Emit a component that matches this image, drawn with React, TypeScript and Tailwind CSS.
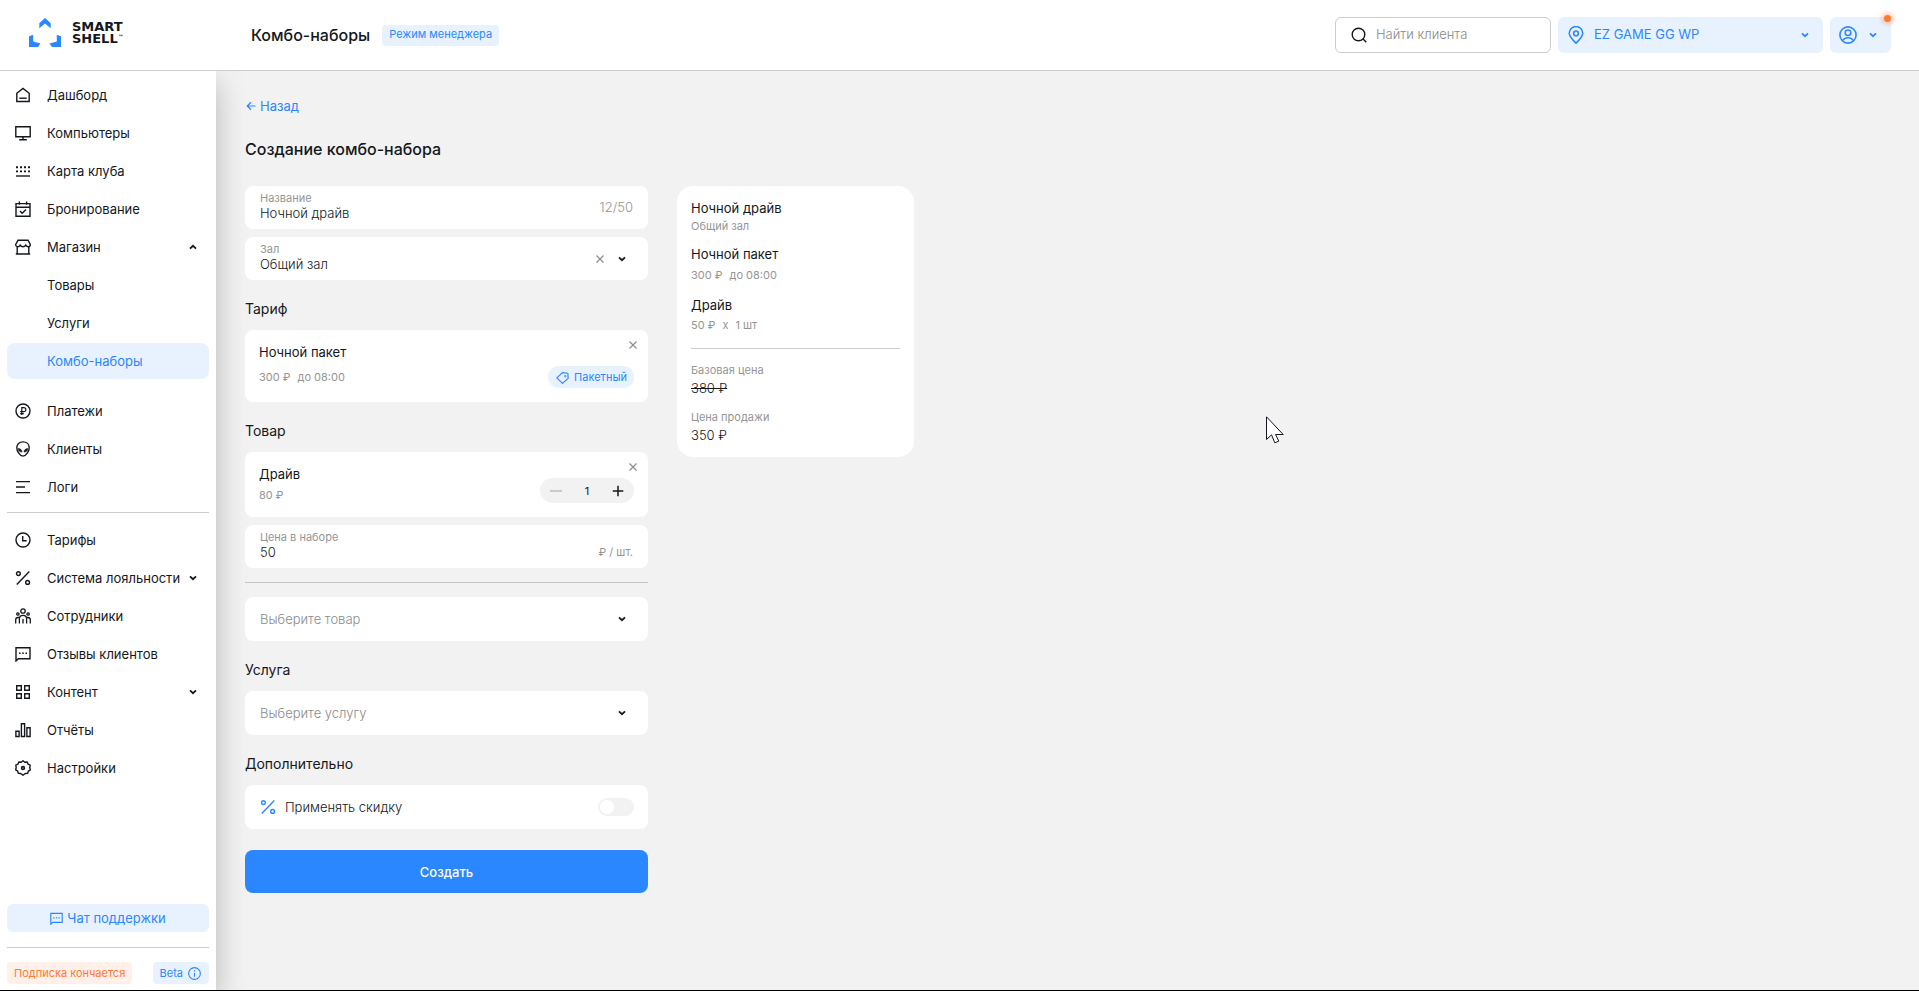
import { useState, type ReactNode } from 'react';

type NavItem = {
  label: string;
  icon?: ReactNode;
  chevron?: 'up' | 'down';
  active?: boolean;
};

function Icon({ children, className = 'w-4 h-4', stroke = 1.4 }: { children: ReactNode; className?: string; stroke?: number }) {
  return (
    <svg
      viewBox="0 0 16 16"
      fill="none"
      stroke="currentColor"
      strokeWidth={stroke}
      className={`shrink-0 ${className}`}
      aria-hidden
    >
      {children}
    </svg>
  );
}

function Chevron({ up = false, className = 'w-2 h-2' }: { up?: boolean; className?: string }) {
  return (
    <svg viewBox="0 0 8 8" fill="none" stroke="currentColor" strokeWidth={1.8} className={`shrink-0 pointer-events-none ${className}`} aria-hidden>
      <path d={up ? 'M1 5.6 4 2.8l3 2.8' : 'M1 2.4 4 5.2l3-2.8'} />
    </svg>
  );
}

function CrossIcon() {
  return (
    <svg viewBox="0 0 8 8" fill="none" stroke="currentColor" strokeWidth={1.2} className="w-2 h-2" aria-hidden>
      <path d="M.5.5l7 7M7.5.5l-7 7" />
    </svg>
  );
}

const percentPaths = (
  <>
    <circle cx="3.4" cy="3.6" r="1.9" />
    <circle cx="12.6" cy="12.4" r="1.9" />
    <path d="M14.3 1.6 1.8 14.4" />
  </>
);

const chatPaths = (
  <>
    <path d="M1 15V1.7h14v11.1H3.3L1 15Z" />
    <path d="M4 7.3h1.6M7.2 7.3h1.6M10.4 7.3H12" />
  </>
);

const mainNav: NavItem[] = [
  { label: 'Дашборд', icon: <Icon><path d="M1.8 6.3 8 1.4l6.2 4.9v8.2H1.8V6.3Z" /><path d="M4.3 11.2h7.4" /></Icon> },
  { label: 'Компьютеры', icon: <Icon><path d="M.8 1.8h14.4v10H.8zM8 12v2.6M4.2 14.7h7.6" /></Icon> },
  {
    label: 'Карта клуба',
    icon: (
      <Icon>
        <path d="M1 4.2h14M1 8.4h14" strokeWidth="1.9" strokeDasharray="2 2" />
        <path d="M1 13h14" />
      </Icon>
    ),
  },
  { label: 'Бронирование', icon: <Icon><path d="M1 2.6h14v12.6H1zM1 6.2h14M4.4.4v3.4M11.6.4v3.4M5 10l2.2 2.2L11 8.6" /></Icon> },
  {
    label: 'Магазин',
    chevron: 'up',
    icon: (
      <Icon>
        <path d="M3 1.2h10l2.3 4.3c0 1.4-.9 2.2-2.1 2.2s-1.9-.8-2.4-1.6c-.7 1-1.5 1.6-2.8 1.6s-2.1-.6-2.8-1.6c-.5.8-1.2 1.6-2.4 1.6S.7 6.9.7 5.5L3 1.2Z" />
        <path d="M2.2 7.8V15M13.8 7.8V15M.8 15h14.4" />
      </Icon>
    ),
  },
  { label: 'Товары' },
  { label: 'Услуги' },
  { label: 'Комбо-наборы', active: true },
];

const clientNav: NavItem[] = [
  { label: 'Платежи', icon: <Icon><circle cx="8" cy="8" r="7" /><path d="M6.8 12V4.6h2a2 2 0 0 1 0 4.1H5.2M5.2 10.6h3.6" strokeWidth="1.2" /></Icon> },
  {
    label: 'Клиенты',
    icon: (
      <Icon>
        <path d="M8 .9c3.7 0 6.2 2.4 6.2 5.8 0 3.5-3 8.4-6.2 8.4S1.8 10.2 1.8 6.7C1.8 3.3 4.3.9 8 .9Z" />
        <path d="M3.2 7.6c2.3 0 3.8 1.3 3.8 3.5-2.3 0-3.8-1.3-3.8-3.5ZM12.8 7.6c-2.3 0-3.8 1.3-3.8 3.5 2.3 0 3.8-1.3 3.8-3.5Z" fill="currentColor" strokeWidth=".6" />
      </Icon>
    ),
  },
  { label: 'Логи', icon: <Icon><path d="M1 2.6h14M1 8h9M1 13.6h14" /></Icon> },
];

const settingsNav: NavItem[] = [
  { label: 'Тарифы', icon: <Icon><circle cx="8" cy="8" r="7" /><path d="M7.7 4v4.7h4" /></Icon> },
  { label: 'Система лояльности', chevron: 'down', icon: <Icon>{percentPaths}</Icon> },
  {
    label: 'Сотрудники',
    icon: (
      <Icon stroke={1.3}>
        <circle cx="8" cy="3" r="2.2" />
        <circle cx="2.9" cy="6" r="1.2" />
        <circle cx="13.1" cy="6" r="1.2" />
        <path d="M4.4 15.5v-4.7C4.4 8.6 5.9 7.4 8 7.4s3.6 1.2 3.6 3.4v4.7M8 11v4.5M.7 15.5v-3.7c0-1.4.9-2.3 2.3-2.3h1.4M15.3 15.5v-3.7c0-1.4-.9-2.3-2.3-2.3h-1.4" />
      </Icon>
    ),
  },
  { label: 'Отзывы клиентов', icon: <Icon>{chatPaths}</Icon> },
  { label: 'Контент', chevron: 'down', icon: <Icon><path d="M1.7 1.7h4.6v4.6H1.7zM9.7 1.7h4.6v4.6H9.7zM1.7 9.7h4.6v4.6H1.7zM9.7 9.7h4.6v4.6H9.7z" /></Icon> },
  { label: 'Отчёты', icon: <Icon><path d="M.9 9.2h3.2v5.3H.9zM6.4 1.7h3.2v12.8H6.4zM11.9 5.7h3.2v8.8h-3.2z" /></Icon> },
  {
    label: 'Настройки',
    icon: (
      <Icon>
        <path d="M8 .8l1.8 1.5 2.4-.3.9 2.2 2.100 1-.4 2.300.5 2.300-2 1.300-.6 2.300-2.400.1L8 15.200l-2.300-1.700-2.400-.1-.6-2.300-2-1.300.5-2.300-.4-2.300 2.100-1L3.800 2l2.400.3L8 .8Z" strokeLinejoin="round" />
        <circle cx="8" cy="8" r="1.400" strokeWidth="1.600" />
      </Icon>
    ),
  },
];

function NavList({ items }: { items: NavItem[] }) {
  return (
    <ul className="flex flex-col gap-0.5">
      {items.map((item) => (
        <li key={item.label}>
          <a
            href="#"
            className={`h-9 pl-2 pr-3 flex items-center gap-4 rounded-lg text-[13px] leading-5 whitespace-nowrap ${
              item.active ? 'bg-[#e8f2ff] text-[#2b87ff]' : 'text-[#14171c]'
            }`}
          >
            {item.icon ?? <span className="w-4 shrink-0" />}
            <span className="flex-1 min-w-0">{item.label}</span>
            {item.chevron && <Chevron up={item.chevron === 'up'} className="w-2 h-2" />}
          </a>
        </li>
      ))}
    </ul>
  );
}

function Logo() {
  return (
    <a href="#" aria-label="Smart Shell" className="flex items-center gap-[11px] text-[#14171c]">
      <svg viewBox="0 0 32 30" fill="#2b87ff" className="w-8 h-[30px]" aria-hidden>
        <path d="M16 0l5.700 5.200v5L16 5.600l-5.700 4.600v-5L16 0Z" />
        <path d="M0 18.300 4.200 16.700v6.800l7.300 1.900L9 29H0V18.300Z" />
        <path d="M32 18.300 27.800 16.700v6.800l-7.300 1.900L23 29h9V18.300Z" />
      </svg>
      <span className="flex flex-col font-['DejaVu_Sans'] text-[13px] leading-3 font-bold">
        <span>SMART</span>
        <span className="flex">
          SHELL<span className="text-[6px] leading-2">™</span>
        </span>
      </span>
    </a>
  );
}

function Header() {
  return (
    <header className="relative z-10 h-[71px] shrink-0 border-b border-[#cccccc] bg-white flex items-center pl-[29px] pr-7">
      <div className="w-[222px] shrink-0 -mt-1">
        <Logo />
      </div>
      <h1 className="text-base leading-6 font-medium text-[#14171c]">Комбо-наборы</h1>
      <span className="ml-3 h-[21px] px-[7px] pb-0.5 flex items-center rounded bg-[#e8f2ff] text-[#2b87ff] text-[11px] leading-4">
        Режим менеджера
      </span>

      <div className="ml-auto flex items-center gap-[7px] text-[13px] leading-5">
        <label className="w-[216px] h-9 px-[15px] flex items-center gap-[9px] rounded-md border border-[#cccccc]">
          <Icon className="w-4 h-4 text-[#14171c]">
            <circle cx="7.5" cy="7.500" r="6.300" />
            <path d="M11.800 11.800l3.500 3.500" />
          </Icon>
          <input
            type="search"
            aria-label="Найти клиента"
            placeholder="Найти клиента"
            className="w-full min-w-0 pb-0.5 bg-transparent outline-none font-light placeholder:text-[#8a8a8a]"
          />
        </label>

        <label className="w-[265px] h-9 pl-[9px] pr-3.5 flex items-center gap-[9px] rounded-md bg-[#e8f2ff] text-[#2b87ff]">
          <Icon className="w-[18px] h-[18px]">
            <path d="M8 15.300C4.800 12 2 9.600 2 6.500a6 6 0 0 1 12 0c0 3.100-2.800 5.500-6 8.800Z" />
            <circle cx="8" cy="6.600" r="2.100" />
          </Icon>
          <select aria-label="Клуб" className="flex-1 pb-0.5 appearance-none bg-transparent outline-none">
            <option>EZ GAME GG WP</option>
          </select>
          <Chevron className="w-2 h-2" />
        </label>

        <button type="button" aria-label="Профиль" className="relative w-[61px] h-9 px-[9px] flex items-center gap-3 rounded-md bg-[#e8f2ff] text-[#2b87ff]">
          <Icon className="w-[18px] h-[18px]">
            <circle cx="8" cy="8" r="7.200" />
            <circle cx="8" cy="6" r="2.500" />
            <path d="M3.200 13.200C4 11.300 5.800 10.500 8 10.500s4 .8 4.800 2.700" />
          </Icon>
          <Chevron className="w-2 h-2" />
          <span className="absolute right-0 -top-0.5 w-[7px] h-[7px] rounded-full bg-[#ff7a33] shadow-[0_0_5px_2px_rgba(255,122,51,0.45)]" />
        </button>
      </div>
    </header>
  );
}

function Sidebar() {
  return (
    <aside className="w-[216px] shrink-0 bg-white px-[7px] pt-1.5 pb-1.5 flex flex-col shadow-[0_12px_28px_rgba(0,0,0,0.25)]">
      <nav>
        <NavList items={mainNav} />
        <div className="mt-3.5">
          <NavList items={clientNav} />
        </div>
        <hr className="mt-[7px] mb-[9px] border-[#cccccc]" />
        <NavList items={settingsNav} />
      </nav>

      <div className="mt-auto">
        <button type="button" className="w-full h-7 flex items-center justify-center gap-1 rounded-md bg-[#e8f2ff] text-[#2b87ff] text-[13px] leading-5">
          <Icon className="w-[13px] h-[13px]">{chatPaths}</Icon>
          Чат поддержки
        </button>
        <hr className="mt-[15px] mb-3.5 border-[#cccccc]" />
        <div className="flex items-center justify-between text-[11px] leading-4">
          <span className="h-[22px] px-[7px] flex items-center rounded bg-[#fff0e9] text-[#ff7a33]">Подписка кончается</span>
          <button type="button" className="h-[22px] pl-[7px] pr-2 flex items-center gap-[5px] rounded bg-[#e8f2ff] text-[#2b87ff]">
            Beta
            <Icon className="w-[13px] h-[13px]">
              <circle cx="8" cy="8" r="7.200" />
              <path d="M8 7v5M8 4v1.600" />
            </Icon>
          </button>
        </div>
      </div>
    </aside>
  );
}

function SectionTitle({ children }: { children: ReactNode }) {
  return <h3 className="mt-[19px] mb-[11px] text-sm leading-5 text-[#14171c]">{children}</h3>;
}

function EmptySelect({ placeholder }: { placeholder: string }) {
  return (
    <label className="h-11 pl-[15px] pr-[22px] flex items-center rounded-lg bg-white">
      <select aria-label={placeholder} className="flex-1 appearance-none bg-transparent outline-none font-light text-[13px] leading-5 text-[#8a8a8a]">
        <option>{placeholder}</option>
      </select>
      <Chevron />
    </label>
  );
}

function ComboForm() {
  const [name, setName] = useState('Ночной драйв');
  const [price, setPrice] = useState('50');
  const [count, setCount] = useState(1);

  return (
    <form className="w-[403px] shrink-0 text-[13px] text-[#14171c]" onSubmit={(e) => e.preventDefault()}>
      <div className="h-[43px] px-[15px] flex items-center justify-between rounded-lg bg-white">
        <div className="pb-[3px] flex flex-col">
          <label htmlFor="name" className="text-[11px] leading-[14px] text-[#959595]">Название</label>
          <input id="name" value={name} maxLength={50} onChange={(e) => setName(e.target.value)} className="h-4 leading-4 font-light outline-none" />
        </div>
        <span className="text-[#959595] font-light">{name.length}/50</span>
      </div>

      <div className="mt-2 h-[43px] pl-[15px] pr-[22px] flex items-center rounded-lg bg-white">
        <div className="flex-1 pb-[3px] flex flex-col">
          <label htmlFor="hall" className="text-[11px] leading-[14px] text-[#959595]">Зал</label>
          <select id="hall" className="h-4 leading-4 font-light appearance-none outline-none">
            <option>Общий зал</option>
          </select>
        </div>
        <button type="button" aria-label="Очистить" className="mr-3.5 text-[#8a8d91]">
          <CrossIcon />
        </button>
        <Chevron />
      </div>

      <SectionTitle>Тариф</SectionTitle>
      <div className="h-[72px] px-3.5 rounded-lg bg-white relative flex items-center justify-between">
        <div className="pb-[5px]">
          <p className="leading-5">Ночной пакет</p>
          <p className="mt-[7px] flex gap-[7px] text-[11px] leading-4 text-[#959595]">
            <span>300 ₽</span>
            <span>до 08:00</span>
          </p>
        </div>
        <span className="mt-[22px] h-[22px] pl-2 pr-[7px] flex items-center gap-[5px] rounded-full bg-[#e8f2ff] text-[#2b87ff] text-[11px] leading-4">
          <Icon className="w-[13px] h-[13px]">
            <path d="M1 8.500 8 2l6.600.7.400 6.300-7 6.300L1 8.500Z" strokeLinejoin="round" />
            <path d="M10.500 5.500h1.800v1.800h-1.800z" strokeWidth=".8" />
          </Icon>
          Пакетный
        </span>
        <button type="button" aria-label="Убрать тариф" className="absolute right-[11px] top-[11px] text-[#8a8d91]">
          <CrossIcon />
        </button>
      </div>

      <SectionTitle>Товар</SectionTitle>
      <div className="h-[65px] px-3.5 rounded-lg bg-white relative flex items-center justify-between">
        <div className="pb-[3px]">
          <p className="leading-5">Драйв</p>
          <p className="mt-[3px] text-[11px] leading-4 text-[#959595]">80 ₽</p>
        </div>
        <div className="mt-3 w-[94px] h-[25px] px-2.5 flex items-center justify-between rounded-full bg-[#f2f2f2] text-[11px] leading-4">
          <button type="button" aria-label="Меньше" className="text-[#bdbdbd]" onClick={() => setCount(Math.max(1, count - 1))}>
            <Icon className="w-3 h-3" stroke={2}><path d="M0 8h16" /></Icon>
          </button>
          <output>{count}</output>
          <button type="button" aria-label="Больше" onClick={() => setCount(count + 1)}>
            <Icon className="w-3 h-3" stroke={2}><path d="M1 8h14M8 1v14" /></Icon>
          </button>
        </div>
        <button type="button" aria-label="Убрать товар" className="absolute right-[11px] top-[11px] text-[#8a8d91]">
          <CrossIcon />
        </button>
      </div>
      <div className="mt-2 h-[43px] px-[15px] flex items-center justify-between rounded-lg bg-white">
        <div className="pb-[3px] flex flex-col">
          <label htmlFor="price" className="text-[11px] leading-[14px] text-[#959595]">Цена в наборе</label>
          <input id="price" value={price} onChange={(e) => setPrice(e.target.value)} className="h-4 leading-4 font-light outline-none" />
        </div>
        <span className="mt-2.5 text-[11px] leading-4 text-[#959595]">₽ / шт.</span>
      </div>

      <hr className="my-3.5 border-[#c4c4c4]" />
      <EmptySelect placeholder="Выберите товар" />

      <SectionTitle>Услуга</SectionTitle>
      <EmptySelect placeholder="Выберите услугу" />

      <SectionTitle>Дополнительно</SectionTitle>
      <label className="h-11 pl-[15px] pr-3.5 flex items-center gap-[9px] rounded-lg bg-white leading-5">
        <Icon className="w-4 h-4 text-[#2b87ff]">{percentPaths}</Icon>
        <span className="flex-1 font-light">Применять скидку</span>
        <input
          type="checkbox"
          role="switch"
          className="appearance-none w-9 h-[18px] p-0.5 flex rounded-full bg-[#f2f2f2] before:w-3.5 before:h-3.5 before:rounded-full before:bg-white checked:bg-[#2b87ff] checked:justify-end"
        />
      </label>

      <button type="submit" className="mt-[21px] w-full h-[43px] rounded-lg bg-[#2b87ff] text-white font-medium leading-5">
        Создать
      </button>
    </form>
  );
}

function Summary() {
  return (
    <section className="w-[237px] px-3.5 py-3 rounded-2xl bg-white text-[13px] leading-5 text-[#14171c]">
      <p>Ночной драйв</p>
      <p className="text-[11px] leading-4 text-[#959595]">Общий зал</p>

      <p className="mt-2.5">Ночной пакет</p>
      <p className="mt-[3px] flex gap-[7px] text-[11px] leading-4 text-[#959595]">
        <span>300 ₽</span>
        <span>до 08:00</span>
      </p>

      <p className="mt-3">Драйв</p>
      <p className="mt-0.5 flex gap-[7px] text-[11px] leading-4 text-[#959595]">
        <span>50 ₽</span>
        <span>x</span>
        <span>1 шт</span>
      </p>

      <hr className="mt-[15px] mb-[13px] border-[#cccccc]" />

      <p className="text-[11px] leading-4 text-[#959595]">Базовая цена</p>
      <p className="line-through font-light">380 ₽</p>
      <p className="mt-[11px] text-[11px] leading-4 text-[#959595]">Цена продажи</p>
      <p className="font-light">350 ₽</p>
    </section>
  );
}

export default function App() {
  return (
    <div className="min-h-screen flex flex-col border-b border-black bg-[#f2f2f2] font-['Inter',sans-serif] relative">
      <Header />
      <div className="flex-1 flex">
        <Sidebar />
        <main className="flex-1 px-[29px] pt-[25px] pb-8">
          <a href="#" className="flex w-fit items-center gap-[3px] text-[13px] leading-5 text-[#2b87ff]">
            <Icon className="w-3 h-3" stroke={1.6}><path d="M14 8H3M8 3 3 8l5 5" /></Icon>
            Назад
          </a>
          <h2 className="mt-[21px] text-base leading-6 font-medium text-[#14171c]">Создание комбо-набора</h2>
          <div className="mt-[25px] flex items-start gap-[29px]">
            <ComboForm />
            <Summary />
          </div>
        </main>
      </div>

      <svg viewBox="0 0 19 28" className="absolute left-[1266px] top-[416px] w-[19px] h-7 pointer-events-none" aria-hidden>
        <path d="M.5.8v22.7l5-4.7L8.800 26.800l4-1.700-3.300-6.600h7.700L.5.800Z" fill="#fff" stroke="#15151f" strokeWidth="1" />
      </svg>
    </div>
  );
}
